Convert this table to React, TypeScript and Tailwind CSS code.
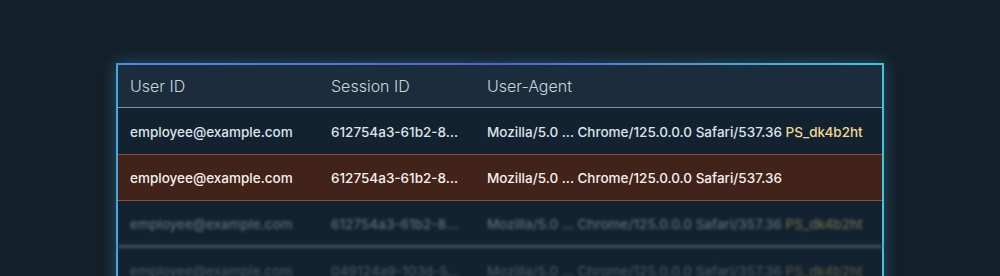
import React from "react"

type Row = {
  user: string
  session: string
  agent: string
  tag?: string
}

const rows: Row[] = [
  {
    user: "employee@example.com",
    session: "612754a3-61b2-8...",
    agent: "Mozilla/5.0 ... Chrome/125.0.0.0 Safari/537.36",
    tag: "PS_dk4b2ht",
  },
  {
    user: "employee@example.com",
    session: "612754a3-61b2-8...",
    agent: "Mozilla/5.0 ... Chrome/125.0.0.0 Safari/537.36",
  },
  {
    user: "employee@example.com",
    session: "612754a3-61b2-8...",
    agent: "Mozilla/5.0 ... Chrome/125.0.0.0 Safari/357.36",
    tag: "PS_dk4b2ht",
  },
  {
    user: "employee@example.com",
    session: "049124a9-103d-5...",
    agent: "Mozilla/5.0 ... Chrome/125.0.0.0 Safari/357.36",
    tag: "PS_dk4b2ht",
  },
]

const cols = "grid grid-cols-[201px_156px_1fr] items-center"

function Cells({ row, tagClass }: { row: Row; tagClass: string }) {
  return (
    <>
      <div className="pl-3 whitespace-nowrap">{row.user}</div>
      <div className="pl-3 whitespace-nowrap">{row.session}</div>
      <div className="pl-3 whitespace-nowrap">
        {row.agent}
        {row.tag && <span className={tagClass}> {row.tag}</span>}
      </div>
    </>
  )
}

export default function App() {
  return (
    <div
      className="h-[276px] w-[1000px] overflow-hidden bg-[#14202a] pt-[63px] pl-[116px]"
      style={{ fontFamily: "Inter, 'Liberation Sans', sans-serif" }}
    >
      <div className="w-[768px] border-x-2 border-b-0 border-l-[#48a6dc] border-r-[#43c2dc] bg-[#132231] shadow-[0_0_14px_rgba(70,170,220,0.35)]">
        {/* top edge */}
        <div className="h-[2px] -mx-[2px] bg-gradient-to-r from-[#4a8ee0] via-[#5560d2] to-[#3fc8da]" />

        {/* Header */}
        <div className={`${cols} h-[43px] bg-[#1b2d3c] border-b border-[#7d95a4] text-[16px] font-light text-[#c9d5dd]`}>
          <div className="pl-3">User ID</div>
          <div className="pl-3">Session ID</div>
          <div className="pl-3">User-Agent</div>
        </div>

        {/* Row 1 */}
        <div className={`${cols} h-[46px] pt-[2px] text-[13.5px] font-medium text-[#dde4e8]`}>
          <Cells row={rows[0]} tagClass="text-[#f1d98f]" />
        </div>

        {/* Row 2 (highlighted) */}
        <div className={`${cols} h-[47px] pt-[2px] bg-[#41231a] border-y border-[#8e4b37] text-[13.5px] font-medium text-[#f6f1ee]`}>
          <Cells row={rows[1]} tagClass="text-[#f1d98f]" />
        </div>

        {/* Faded rows */}
        <div className="blur-[1.8px]">
          <div className={`${cols} h-[47px] pt-[2px] border-b-[3px] border-[#45545f] text-[13.5px] font-medium text-[#5f6e79]`}>
            <Cells row={rows[2]} tagClass="text-[#6e6a4c]" />
          </div>
          <div className={`${cols} h-[46px] text-[13.5px] font-medium text-[#44535e]`}>
            <Cells row={rows[3]} tagClass="text-[#55553f]" />
          </div>
        </div>
      </div>
    </div>
  )
}
